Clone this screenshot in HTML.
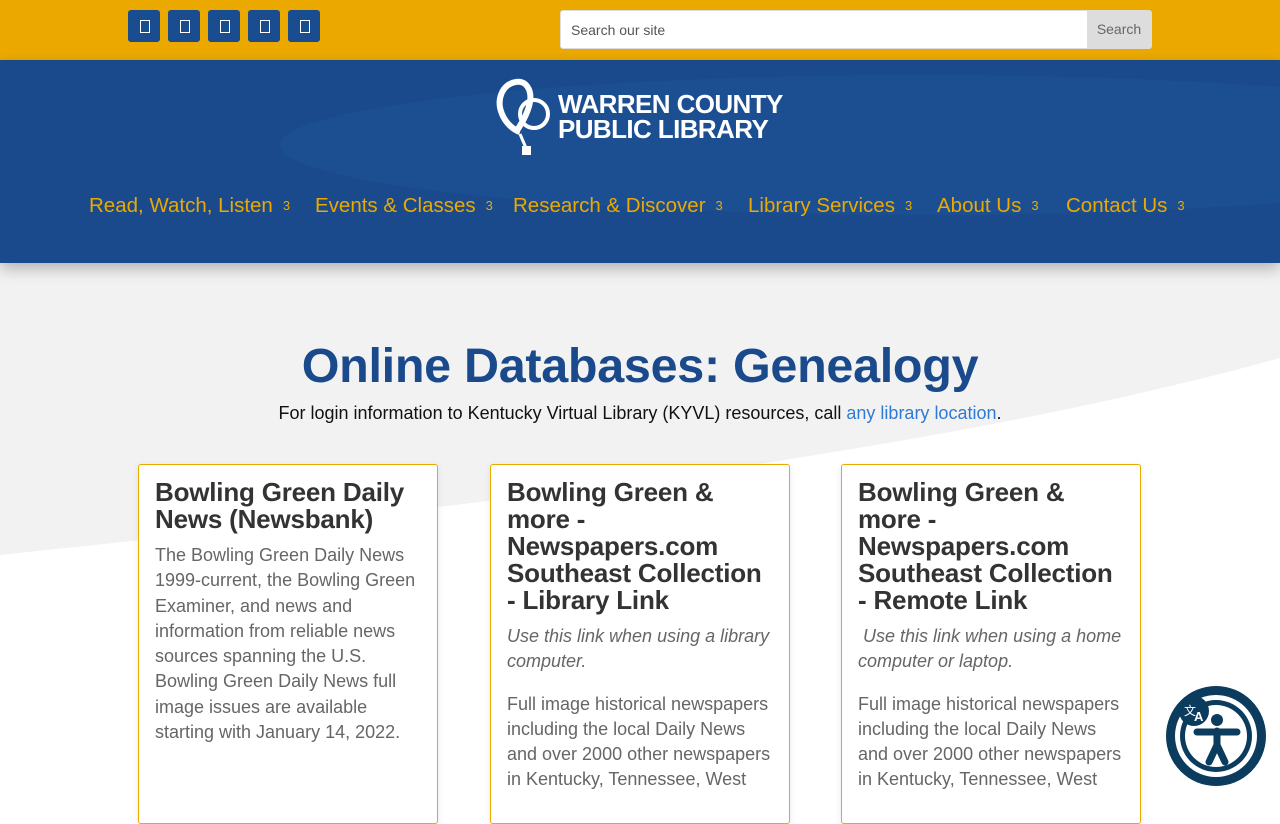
<!DOCTYPE html>
<html><head><meta charset="utf-8"><style>
*{margin:0;padding:0;box-sizing:border-box}
body{width:1280px;height:800px;overflow:hidden;font-family:"Liberation Sans",sans-serif;background:#fff;position:relative}
.top{position:absolute;left:0;top:0;width:1280px;height:60px;background:#eba900}
.soc{position:absolute;top:10px;width:32px;height:32px;background:#1a4d8f;border-radius:3px}
.soc:after{content:"";position:absolute;left:12px;top:10px;width:8px;height:11px;border:1.5px solid #fff}
.search{position:absolute;left:560px;top:10px;width:592px;height:39px;background:#fff;border:1px solid #ddd;border-radius:3px;font-size:14px;color:#555}
.search span{position:absolute;left:10px;top:11px}
.search b{position:absolute;right:0;top:0;width:64px;height:37px;background:#ddd;font-weight:normal;color:#666;text-align:center;line-height:37px}
.hdr{position:absolute;left:0;top:60px;width:1280px;height:203px;background:#1a4a8b;overflow:hidden;box-shadow:0 6px 14px rgba(0,0,0,.25);z-index:2}
.nav{position:absolute;top:194px;left:0;width:1280px;font-size:20.5px;color:#eba900;z-index:3}
.nav span{position:absolute;white-space:nowrap}
.nav i{font-style:normal;font-size:13px;margin-left:10px;vertical-align:2px}
.main{position:absolute;left:0;top:263px;width:1280px;height:537px;background:#f2f2f2}
h1{position:absolute;top:338px;width:1280px;text-align:center;color:#1a4a8b;font-size:48.5px;font-weight:bold;letter-spacing:-0.3px}
.sub{position:absolute;top:403px;width:1280px;text-align:center;font-size:18px;color:#111}
.sub a{color:#2f7ad6;text-decoration:none}
.card{position:absolute;top:464px;width:300px;height:360px;background:#fff;border:1px solid #eba900;border-radius:3px;padding:14px 16px;box-shadow:0 2px 8px rgba(0,0,0,.08)}
.card h2{font-size:26px;line-height:27px;color:#333;font-weight:bold;margin-bottom:10px;letter-spacing:-0.2px}
.card p{font-size:18px;line-height:25.3px;color:#666}
.card p.it{font-style:italic;margin-bottom:17px}
</style></head><body>
<div class="top"></div>
<div class="soc" style="left:128px"></div><div class="soc" style="left:168px"></div><div class="soc" style="left:208px"></div><div class="soc" style="left:248px"></div><div class="soc" style="left:288px"></div>
<div class="search"><span>Search our site</span><b>Search</b></div>
<div class="hdr">
<svg width="1280" height="203" style="position:absolute;left:0;top:0"><ellipse cx="920" cy="85" rx="640" ry="70" fill="#1c4f92"/></svg>
<svg width="60" height="80" style="position:absolute;left:494px;top:18px" viewBox="0 0 60 80"><path d="M22 4C8 6 2 22 8 36c4 10 12 16 18 18M22 4c10-2 16 8 14 20-2 12-10 24-14 30" stroke="#fff" stroke-width="6" fill="none"/><circle cx="40" cy="36" r="14" stroke="#fff" stroke-width="4" fill="none"/><path d="M26 56l6 14" stroke="#fff" stroke-width="3"/><rect x="28" y="68" width="9" height="9" fill="#fff"/></svg>
<div style="position:absolute;left:558px;top:32px;color:#fff;font-size:26px;font-weight:bold;line-height:25px;letter-spacing:-0.6px">WARREN COUNTY<br>PUBLIC LIBRARY</div>
</div>
<div class="nav">
<span style="left:89px">Read, Watch, Listen<i>3</i></span>
<span style="left:315px">Events &amp; Classes<i>3</i></span>
<span style="left:513px">Research &amp; Discover<i>3</i></span>
<span style="left:748px">Library Services<i>3</i></span>
<span style="left:937px">About Us<i>3</i></span>
<span style="left:1066px">Contact Us<i>3</i></span>
</div>
<div class="main"><svg width="1280" height="537" style="position:absolute;left:0;top:0"><path d="M0 292C400 250 900 200 1280 95V537H0Z" fill="#fff"/></svg></div>
<h1>Online Databases: Genealogy</h1>
<div class="sub">For login information to Kentucky Virtual Library (KYVL) resources, call <a>any library location</a>.</div>
<div class="card" style="left:138px"><h2>Bowling Green Daily News (Newsbank)</h2><p>The Bowling Green Daily News 1999-current, the Bowling Green Examiner, and news and information from reliable news sources spanning the U.S. Bowling Green Daily News full image issues are available starting with January 14, 2022.</p></div>
<div class="card" style="left:490px"><h2>Bowling Green &amp; more - Newspapers.com Southeast Collection - Library Link</h2><p class="it">Use this link when using a library computer.</p><p>Full image historical newspapers including the local Daily News and over 2000 other newspapers in Kentucky, Tennessee, West</p></div>
<div class="card" style="left:841px"><h2>Bowling Green &amp; more - Newspapers.com Southeast Collection - Remote Link</h2><p class="it">&nbsp;Use this link when using a home computer or laptop.</p><p>Full image historical newspapers including the local Daily News and over 2000 other newspapers in Kentucky, Tennessee, West</p></div>
<svg width="102" height="102" viewBox="0 0 102 102" style="position:absolute;left:1165px;top:685px;z-index:5">
<circle cx="51" cy="51" r="50" fill="#0b3c5d"/><circle cx="51" cy="51" r="41" fill="#fff"/><circle cx="51" cy="51" r="36" fill="#0b3c5d"/><circle cx="51" cy="51" r="31" fill="#fff"/>
<circle cx="29" cy="26" r="15" fill="#0b3c5d"/>
<text x="19" y="30" font-size="12" fill="#fff" font-family="Noto Sans CJK SC,sans-serif">文</text><text x="29" y="36" font-size="13" font-weight="bold" fill="#fff">A</text>
<circle cx="52" cy="35" r="6" fill="#0b3c5d"/>
<path d="M32 47h40M52 46v16M52 60l-8 17M52 60l8 17" stroke="#0b3c5d" stroke-width="7" stroke-linecap="round" fill="none"/>
</svg>
</body></html>
